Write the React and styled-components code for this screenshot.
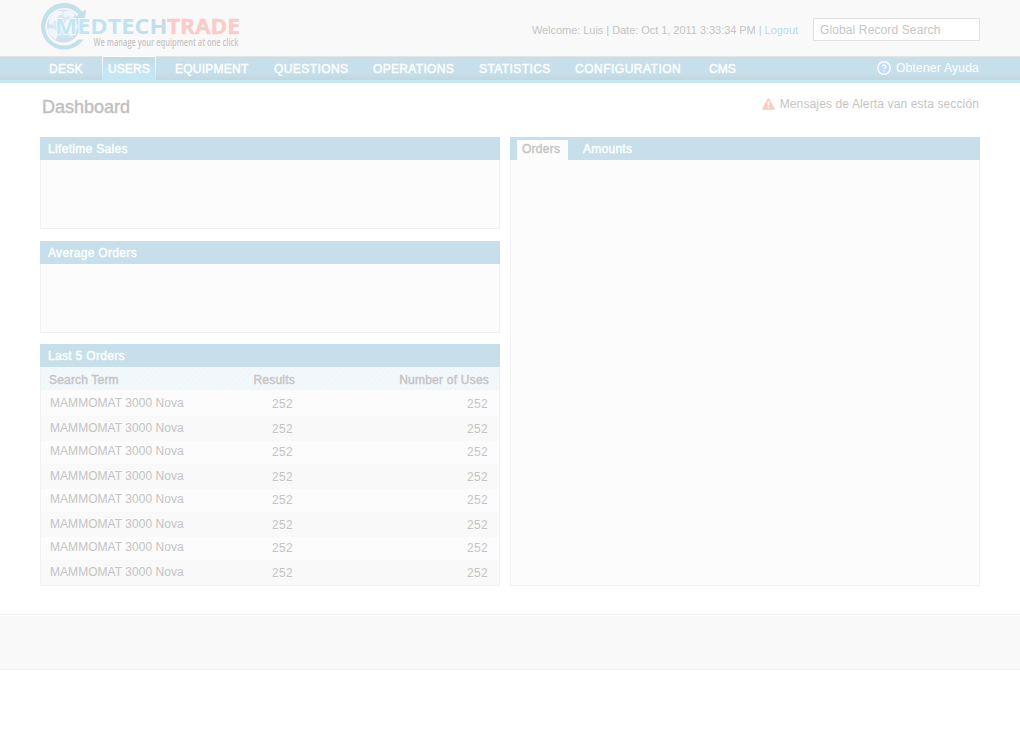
import React from 'react';
import styled, { createGlobalStyle, css } from 'styled-components';

const Global = createGlobalStyle`
  * { box-sizing: border-box; }
  body { margin: 0; background: #fff; font-family: "Liberation Sans", Arial, sans-serif; font-size: 12px; color: #c4c4c4; }
`;

const heavy = css`
  -webkit-text-stroke: 0.4px currentColor;
`;

const Page = styled.div`
  height: 744px;
  overflow: hidden;
`;
const Header = styled.header`
  height: 56px;
  padding: 0 40px;
  background: #f9f9f9;
  display: flex;
  justify-content: space-between;
`;
const Account = styled.div`
  display: flex;
  align-items: flex-start;
  padding-top: 18px;
`;
const Session = styled.p`
  margin: 0 15px 0 0;
  font-size: 11px;
  line-height: 25px;
  letter-spacing: -0.04px;
  white-space: pre;
`;
const Logout = styled.a`
  color: #bcdbe8;
`;
const Search = styled.input`
  width: 167px;
  height: 23px;
  padding: 0 6px;
  border: 1px solid #e3e3e3;
  background: #fff;
  outline: 0;
  border-radius: 0;
  font: 12px "Liberation Sans", Arial, sans-serif;
  letter-spacing: 0.12px;
  &::placeholder { color: #c6c6c6; opacity: 1; }
`;
const Nav = styled.nav`
  height: 27px;
  padding: 0 41px 0 36px;
  display: flex;
  justify-content: space-between;
  border-top: 1px solid #e2e4e5;
  border-bottom: 3px solid #c5e6f3;
  background: linear-gradient(#c6dfea 0, #c6dfea 70%, #c3d6df 100%) padding-box;
`;
const Menu = styled.div`
  display: flex;
`;
const Item = styled.a`
  width: ${(p) => p.$w}px;
  padding-left: ${(p) => p.$pad}px;
  color: #fff;
  line-height: 25px;
  letter-spacing: ${(p) => p.$track}px;
  white-space: nowrap;
  ${heavy}
  ${(p) => p.$active && css`
    border-top: 1px solid #fff;
    margin-top: -1px;
    background:
      linear-gradient(#fff, #c5e6f3) 0 0 / 1px 100% no-repeat,
      linear-gradient(#fff, #c5e6f3) 100% 0 / 1px 100% no-repeat,
      linear-gradient(#c3d9e4, #c5e6f3 55%);
  `}
`;
const Help = styled.a`
  display: flex;
  gap: 5px;
  color: #fff;
  line-height: 22px;
  letter-spacing: 0.25px;
  svg { margin-top: 4px; }
`;
const TitleRow = styled.div`
  display: flex;
  justify-content: space-between;
  height: 54px;
  padding: 0 41px 0 42px;
`;
const Title = styled.h1`
  margin: 0;
  font-size: 18px;
  font-weight: 400;
  line-height: 48px;
  letter-spacing: 0;
  color: #c0c0c0;
  ${heavy}
`;
const Alert = styled.div`
  display: flex;
  gap: 5px;
  line-height: 42px;
  letter-spacing: 0.13px;
  svg { margin-top: 15px; }
`;
const Main = styled.main`
  display: grid;
  grid-template-columns: 460px 470px;
  gap: 10px;
  padding: 0 40px;
  height: 449px;
`;
const Column = styled.div`
  display: flex;
  flex-direction: column;
`;
const Panel = styled.section`
  display: flex;
  flex-direction: column;
  height: ${(p) => p.$h}px;
  margin-bottom: ${(p) => p.$gap || 0}px;
`;
const PanelHead = styled.h2`
  flex: none;
  display: flex;
  margin: 0;
  height: 23px;
  padding-left: 8px;
  background: #c6dfea;
  color: #fff;
  font-size: 12px;
  font-weight: 400;
  line-height: 24px;
  letter-spacing: 0.32px;
  ${heavy}
`;
const PanelBody = styled.div`
  flex: 1;
  border: 1px solid #f1f1f1;
  border-top: 0;
  background: #fcfcfc;
`;
const TabHead = styled(PanelHead)`
  padding-left: 7px;
  letter-spacing: 0.26px;
`;
const Tab = styled.span`
  ${(p) => p.$active ? css`
    width: 51px;
    margin-top: 3px;
    padding-left: 5px;
    line-height: 18px;
    background: #fcfcfc;
    color: #c4c4c4;
  ` : css`
    padding-left: 15px;
  `}
`;
const Row = styled.div`
  display: grid;
  grid-template-columns: 1fr 52px 195px;
  height: ${(p) => p.$h}px;
  padding: 0 11px 0 9px;
  line-height: ${(p) => (p.$h === 23 ? 21 : p.$h)}px;
  letter-spacing: 0.05px;
  background: ${(p) => (p.$odd ? '#f9f9f9' : '#fcfcfc')};
`;
const HeadRow = styled(Row)`
  grid-template-columns: 1fr 52px 194px;
  padding: 0 10px 0 8px;
  line-height: 26px;
  letter-spacing: 0.18px;
  background: repeating-linear-gradient(135deg, #f0f7fa 0 2px, #f3f9fb 2px 4px);
  ${heavy}
`;
const Num = styled.span`
  text-align: right;
  padding-top: 1px;
  letter-spacing: 0.3px;
`;
const HeadNum = styled(Num)`
  padding-top: 0;
  letter-spacing: 0.22px;
`;
const Footer = styled.footer`
  height: 56px;
  margin-top: 28px;
  border: solid #efefef;
  border-width: 1px 0;
  background: #f9f9f9;
  box-shadow: inset 0 1px #fff;
`;

const LogoArt = styled.svg`
  display: block;
  overflow: visible;
`;

const Logo = () => (
  <LogoArt width="204" height="56" viewBox="0 0 204 56" role="img" aria-label="MedTechTrade">
    <defs>
      <radialGradient id="sea" cx=".4" cy=".35" r=".7">
        <stop offset="0" stopColor="#e0eaf6" /><stop offset="1" stopColor="#cadff0" />
      </radialGradient>
      <linearGradient id="med" x1="0" x2="1">
        <stop offset="0" stopColor="#c4e7f5" /><stop offset=".5" stopColor="#c3e2ef" /><stop offset="1" stopColor="#c4dce8" />
      </linearGradient>
    </defs>
    <circle cx="23.5" cy="26" r="16.5" fill="url(#sea)" />
    <path d="M9 19q3-6 8-8l5 0 1 3-5 2-1 4-4 2 1 3-5-1zM25 11l6 0 4 4-3 3-4-2-3 2-2-4zM9 28l6 1 3 5-2 6-5-4-3-5zM27 19l8 1 3 6-4 9-4 2-3-8-3-4z" fill="#f5f8fb" opacity=".85" />
    <path d="M46 10L44.8 20L35 17.6L38.4 14.6A18.8 18.8 0 1 0 38 39.5L43.5 39.5A23.3 23.3 0 1 1 38.5 7.8L41.8 11.6Z" fill="#c5dfeb" />
    <g fontFamily='"Open Sans", "Noto Sans", sans-serif' fontWeight="700" fontSize="20.6">
      <text x="15" y="34.2" textLength="112.5" lengthAdjust="spacingAndGlyphs" fill="url(#med)" stroke="#f9fbfc" strokeWidth="1.4" paintOrder="stroke">MEDTECH</text>
      <text x="127" y="34.2" textLength="73" lengthAdjust="spacingAndGlyphs" fill="#fbcaca" stroke="#fbcaca" strokeWidth=".3">TRADE</text>
    </g>
    <text x="53.5" y="45.5" textLength="145" lengthAdjust="spacingAndGlyphs" fontFamily='"Open Sans", "Noto Sans", sans-serif' fontWeight="600" fontSize="10.3" fill="#c6c6c6">We manage your equipment at one click</text>
  </LogoArt>
);

const HelpIcon = () => (
  <svg width="14" height="14" viewBox="0 0 14 14">
    <circle cx="7" cy="7" r="6.2" fill="#bfdcfa" stroke="#fff" strokeWidth="1.4" />
    <path d="M5.2 5.7Q5.3 4 7 4T8.8 5.5Q8.8 6.4 7.7 7Q7 7.4 7 8.1M7 9.2v1.3" fill="none" stroke="#fff" strokeWidth="1.4" />
  </svg>
);

const AlertIcon = () => (
  <svg width="13" height="12" viewBox="0 0 13 12">
    <path d="M6.5 1L12 11H1Z" fill="#fccbbf" stroke="#fccbbf" strokeWidth="1.6" strokeLinejoin="round" />
    <path d="M6.5 3.2v4.2M6.5 8.7v1.5" stroke="#fff" strokeWidth="1.7" />
  </svg>
);

const menu = [
  { label: 'DESK', w: 66, pad: 13, track: 0.25 },
  { label: 'USERS', w: 54, pad: 6, track: 0.1, active: true },
  { label: 'EQUIPMENT', w: 99, pad: 19, track: 0.25 },
  { label: 'QUESTIONS', w: 99, pad: 19, track: 0.43 },
  { label: 'OPERATIONS', w: 105, pad: 19, track: 0.33 },
  { label: 'STATISTICS', w: 97, pad: 20, track: 0.42 },
  { label: 'CONFIGURATION', w: 134, pad: 19, track: 0.5 },
  { label: 'CMS', w: 60, pad: 19, track: 0.1 },
];
const rowHeights = [26, 25, 23, 25, 23, 25, 23, 25];

export default function App() {
  return (
    <Page>
      <Global />
      <Header>
        <Logo />
        <Account>
          <Session>Welcome: Luis | Date: Oct 1, 2011 3:33:34 PM | <Logout>Logout</Logout></Session>
          <Search placeholder="Global Record Search" />
        </Account>
      </Header>
      <Nav>
        <Menu>
          {menu.map((m) => (
            <Item key={m.label} $w={m.w} $pad={m.pad} $track={m.track} $active={m.active}>{m.label}</Item>
          ))}
        </Menu>
        <Help><HelpIcon />Obtener Ayuda</Help>
      </Nav>
      <TitleRow>
        <Title>Dashboard</Title>
        <Alert><AlertIcon />Mensajes de Alerta van esta sección</Alert>
      </TitleRow>
      <Main>
        <Column>
          <Panel $h={92} $gap={12}><PanelHead>Lifetime Sales</PanelHead><PanelBody /></Panel>
          <Panel $h={92} $gap={11}><PanelHead>Average Orders</PanelHead><PanelBody /></Panel>
          <Panel $h={242}>
            <PanelHead>Last 5 Orders</PanelHead>
            <PanelBody>
              <HeadRow $h={23}><span>Search Term</span><HeadNum>Results</HeadNum><HeadNum>Number of Uses</HeadNum></HeadRow>
              {rowHeights.map((h, i) => (
                <Row key={i} $h={h} $odd={i % 2 === 1}>
                  <span>MAMMOMAT 3000 Nova</span><Num>252</Num><Num>252</Num>
                </Row>
              ))}
            </PanelBody>
          </Panel>
        </Column>
        <Panel $h={449}>
          <TabHead><Tab $active>Orders</Tab><Tab>Amounts</Tab></TabHead>
          <PanelBody />
        </Panel>
      </Main>
      <Footer />
    </Page>
  );
}
